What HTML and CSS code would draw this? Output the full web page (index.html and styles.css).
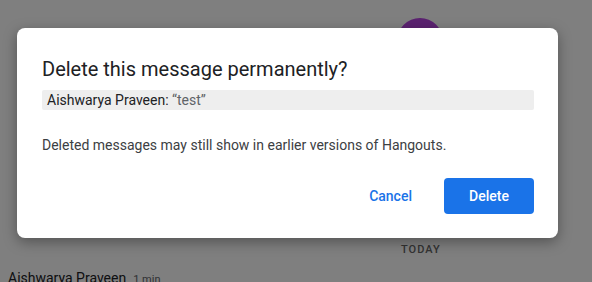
FILE: index.html
```html
<!DOCTYPE html>
<html>
<head>
<meta charset="utf-8">
<link rel="stylesheet" href="styles.css">
</head>
<body>
<div class="page">
  <div class="chat">
    <div class="avatar-row"><div class="avatar"></div></div>
    <div class="day">TODAY</div>
    <div class="msg-head"><span class="sender">Aishwarya Praveen</span><span class="time">1 min</span></div>
  </div>
  <div class="scrim"></div>
  <div class="dialog">
    <h1 class="title">Delete this message permanently?</h1>
    <div class="quote"><span class="who">Aishwarya Praveen:</span> <span class="text">“test”</span></div>
    <p class="body">Deleted messages may still show in earlier versions of Hangouts.</p>
    <div class="actions">
      <button class="btn btn-text">Cancel</button>
      <button class="btn btn-primary">Delete</button>
    </div>
  </div>
</div>
</body>
</html>
```
FILE: styles.css
```css
* { box-sizing: border-box; }
html, body { margin: 0; padding: 0; }
body {
  width: 592px;
  height: 282px;
  overflow: hidden;
  background: #ffffff;
  font-family: Roboto, "Liberation Sans", Arial, sans-serif;
}
.page {
  position: relative;
  width: 592px;
  height: 282px;
  overflow: hidden;
}
.chat {
  display: flex;
  flex-direction: column;
  padding-top: 18px;
}
.avatar-row {
  display: flex;
  padding-left: 397px;
}
.avatar {
  width: 46px;
  height: 46px;
  border-radius: 50%;
  background: #b644e0;
}
.day {
  margin-top: 180px;
  padding-left: 401px;
  font-size: 11px;
  font-weight: 500;
  letter-spacing: 1px;
  color: #666666;
  line-height: 12px;
}
.msg-head {
  margin-top: 14px;
  padding-left: 8px;
  display: flex;
  align-items: baseline;
  gap: 7px;
  line-height: 16px;
}
.sender { font-size: 14px; color: #202124; }
.time { font-size: 11px; color: #5f6368; }
.scrim {
  position: absolute;
  inset: 0;
  background: rgba(0, 0, 0, 0.5);
}
.dialog {
  position: absolute;
  left: 17px;
  top: 28px;
  width: 541px;
  height: 210px;
  background: #ffffff;
  border-radius: 8px;
  box-shadow: 0 4px 14px rgba(0, 0, 0, 0.35);
  padding: 29px 24px 24px 25px;
  display: flex;
  flex-direction: column;
}
.title {
  margin: 0;
  font-size: 20px;
  font-weight: 400;
  line-height: 24px;
  color: #202124;
}
.quote {
  margin-top: 9px;
  height: 20px;
  line-height: 20px;
  background: #eeeeee;
  border-radius: 2px;
  padding-left: 5px;
  font-size: 14px;
}
.who { color: #202124; }
.text { color: #5f6368; }
.body {
  margin: 25px 0 0;
  font-size: 14px;
  line-height: 20px;
  color: #3c4043;
}
.actions {
  margin-top: auto;
  display: flex;
  justify-content: flex-end;
  align-items: center;
  gap: 16px;
}
.btn {
  height: 36px;
  border: none;
  border-radius: 4px;
  font-family: Roboto, "Liberation Sans", Arial, sans-serif;
  font-size: 14px;
  font-weight: 500;
  cursor: pointer;
}
.btn-text {
  background: transparent;
  color: #1a73e8;
  padding: 0 16px;
}
.btn-primary {
  width: 90px;
  background: #1a73e8;
  color: #ffffff;
  padding: 0;
}
```
